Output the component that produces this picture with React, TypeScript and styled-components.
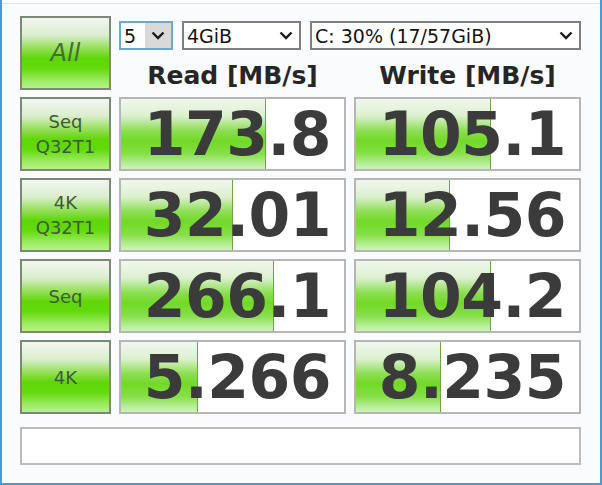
import React from 'react';
import styled, { createGlobalStyle } from 'styled-components';

const GlobalStyle = createGlobalStyle`
  html, body {
    margin: 0;
    padding: 0;
    background: #ffffff;
  }
  body {
    font-family: "DejaVu Sans", Verdana, sans-serif;
  }
`;

const Frame = styled.div`
  width: 602px;
  height: 485px;
  box-sizing: border-box;
  padding-top: 3px;
  border-left: 2px solid #4a9bd4;
  border-right: 2px solid #4a9bd4;
  border-bottom: 2px solid #4a9bd4;
  background: #ffffff;
`;

const Client = styled.div`
  height: 100%;
  box-sizing: border-box;
  border-top: 1px solid #e2e5e8;
  background: #f9fbfc;
  padding: 12px 0 0 18px;
  display: grid;
  grid-template-columns: 91px 227px 227px;
  grid-template-rows: repeat(5, 74px) 44px;
  column-gap: 8px;
  row-gap: 7px;
`;

const greenFace = `linear-gradient(
  to bottom,
  #f3f6f1 0%,
  #dbeecf 24%,
  #92df55 44%,
  #5fd606 58%,
  #63da0c 72%,
  #9dec66 90%,
  #b6f188 100%
)`;

const GreenButton = styled.div`
  box-sizing: border-box;
  border: 2px solid #7b8a77;
  background: ${greenFace};
  display: flex;
  flex-direction: column;
  align-items: center;
  justify-content: center;
  color: #3e5c32;
  font-size: 18px;
  line-height: 25px;
  user-select: none;
`;

const AllButton = styled(GreenButton)`
  font-size: 24px;
  font-style: oblique 3deg;
  color: #466a38;
`;

const TopArea = styled.div`
  grid-column: 2 / 4;
  display: flex;
  flex-direction: column;
`;

const ComboRow = styled.div`
  margin-top: 5px;
  display: flex;
  gap: 9px;
  height: 29px;
`;

const Combo = styled.div<{ $w?: number; $focused?: boolean }>`
  box-sizing: border-box;
  height: 29px;
  ${(p) => (p.$w ? `width: ${p.$w}px;` : 'flex: 1;')}
  border: 2px solid ${(p) => (p.$focused ? '#6fa8cf' : '#7f7f7f')};
  background: #ffffff;
  display: flex;
  align-items: stretch;
  font-size: 19px;
  color: #151515;
`;

const ComboText = styled.span`
  flex: 1;
  padding-left: 3px;
  display: flex;
  align-items: center;
  white-space: nowrap;
`;

const ComboArrow = styled.span<{ $focused?: boolean }>`
  width: 26px;
  display: flex;
  align-items: center;
  justify-content: center;
  background: ${(p) => (p.$focused ? '#d9d9d9' : 'transparent')};
`;

const Headers = styled.div`
  display: grid;
  grid-template-columns: 227px 227px;
  column-gap: 8px;
  padding-top: 14px;
`;

const Header = styled.div`
  text-align: center;
  font-weight: bold;
  font-size: 25px;
  line-height: 24px;
  color: #262626;
  white-space: nowrap;
`;

const Cell = styled.div`
  position: relative;
  box-sizing: border-box;
  border: 2px solid #b6b6b6;
  background: #ffffff;
  display: flex;
  align-items: center;
  justify-content: flex-end;
  padding-right: 13px;
  overflow: hidden;
`;

const Bar = styled.div`
  position: absolute;
  left: 0;
  top: 0;
  bottom: 0;
  box-sizing: border-box;
  border-right: 1px solid #6aa64a;
  background: linear-gradient(
    to bottom,
    #f1f7ee 0%,
    #dcf0cf 24%,
    #8ade50 46%,
    #72d927 60%,
    #86df48 78%,
    #bcefa0 94%,
    #cdf3b8 100%
  );
`;

const Value = styled.span`
  position: relative;
  font-weight: bold;
  font-size: 60px;
  line-height: 1;
  letter-spacing: -0.5px;
  color: #3b3b3b;
`;

const Comment = styled.div`
  grid-column: 1 / 4;
  margin-top: 6px;
  box-sizing: border-box;
  border: 2px solid #bcbcbc;
  background: #ffffff;
`;

const Chevron = () => (
  <svg width="14" height="9" viewBox="0 0 14 9">
    <polyline
      points="1.5,1.5 7,7 12.5,1.5"
      fill="none"
      stroke="#1b1b1b"
      strokeWidth="2.4"
    />
  </svg>
);

type Result = { label: string[]; read: number; write: number };

const results: Result[] = [
  { label: ['Seq', 'Q32T1'], read: 173.8, write: 105.1 },
  { label: ['4K', 'Q32T1'], read: 32.01, write: 12.56 },
  { label: ['Seq'], read: 266.1, write: 104.2 },
  { label: ['4K'], read: 5.266, write: 8.235 },
];

const INNER = 223;

// CrystalDiskMark style log meter
const meter = (v: number) => {
  const r = Math.log10(v * 10) / 5;
  return Math.max(0, Math.min(1, r)) * INNER;
};

const fmt = (v: number) => {
  if (v >= 100) return v.toFixed(1);
  if (v >= 10) return v.toFixed(2);
  return v.toFixed(3);
};

const ScoreCell: React.FC<{ value: number }> = ({ value }) => (
  <Cell>
    <Bar style={{ width: Math.round(meter(value)) }} />
    <Value>{fmt(value)}</Value>
  </Cell>
);

export default function App() {
  return (
    <>
      <GlobalStyle />
      <Frame>
        <Client>
          <AllButton>All</AllButton>
          <TopArea>
            <ComboRow>
              <Combo $w={54} $focused>
                <ComboText>5</ComboText>
                <ComboArrow $focused>
                  <Chevron />
                </ComboArrow>
              </Combo>
              <Combo $w={119}>
                <ComboText>4GiB</ComboText>
                <ComboArrow>
                  <Chevron />
                </ComboArrow>
              </Combo>
              <Combo>
                <ComboText>C: 30% (17/57GiB)</ComboText>
                <ComboArrow>
                  <Chevron />
                </ComboArrow>
              </Combo>
            </ComboRow>
            <Headers>
              <Header>Read [MB/s]</Header>
              <Header>Write [MB/s]</Header>
            </Headers>
          </TopArea>

          {results.map((r) => (
            <React.Fragment key={r.label.join(' ')}>
              <GreenButton>
                {r.label.map((l) => (
                  <span key={l}>{l}</span>
                ))}
              </GreenButton>
              <ScoreCell value={r.read} />
              <ScoreCell value={r.write} />
            </React.Fragment>
          ))}

          <Comment />
        </Client>
      </Frame>
    </>
  );
}
